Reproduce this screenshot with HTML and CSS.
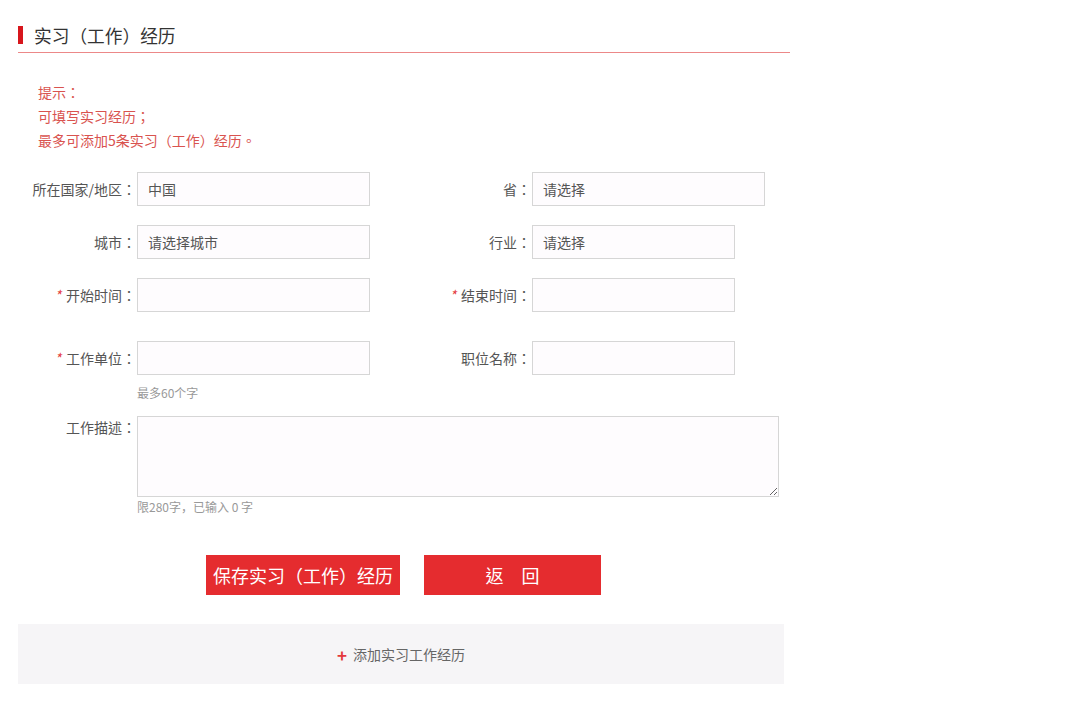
FILE: index.html
```html
<!DOCTYPE html>
<html lang="zh-CN">
<head>
    <meta charset="UTF-8">
    <title>实习（工作）经历</title>
    <link rel="stylesheet" href="styles.css">
</head>
<body>
    <div class="section">
        <h2 class="section-title"><span class="title-bar"></span>实习（工作）经历</h2>

        <div class="tips">
            <p>提示：</p>
            <p>可填写实习经历；</p>
            <p>最多可添加5条实习（工作）经历。</p>
        </div>

        <form class="exp-form">
            <div class="form-row">
                <div class="field">
                    <label class="field-label">所在国家/地区：</label>
                    <input type="text" class="text-input" value="中国">
                </div>
                <div class="field field-right">
                    <label class="field-label">省：</label>
                    <input type="text" class="text-input" value="请选择">
                </div>
            </div>

            <div class="form-row">
                <div class="field">
                    <label class="field-label">城市：</label>
                    <input type="text" class="text-input" value="请选择城市">
                </div>
                <div class="field field-right">
                    <label class="field-label">行业：</label>
                    <input type="text" class="text-input short" value="请选择">
                </div>
            </div>

            <div class="form-row row-gap">
                <div class="field">
                    <label class="field-label"><i class="req">*</i>开始时间：</label>
                    <input type="text" class="text-input">
                </div>
                <div class="field field-right">
                    <label class="field-label"><i class="req">*</i>结束时间：</label>
                    <input type="text" class="text-input short">
                </div>
            </div>

            <div class="form-row no-margin">
                <div class="field">
                    <label class="field-label"><i class="req">*</i>工作单位：</label>
                    <input type="text" class="text-input">
                </div>
                <div class="field field-right">
                    <label class="field-label">职位名称：</label>
                    <input type="text" class="text-input short">
                </div>
            </div>
            <p class="field-hint">最多60个字</p>

            <div class="form-row no-margin textarea-row">
                <div class="field field-top">
                    <label class="field-label">工作描述：</label>
                    <textarea class="text-area"></textarea>
                </div>
            </div>
            <p class="field-hint">限280字，已输入 0 字</p>

            <div class="btn-row">
                <button type="button" class="btn">保存实习（工作）经历</button>
                <button type="button" class="btn btn-back">返　回</button>
            </div>
        </form>

        <div class="add-bar">
            <span class="plus">+</span> 添加实习工作经历
        </div>
    </div>
</body>
</html>
```

FILE: styles.css
```css
* {
    margin: 0;
    padding: 0;
    box-sizing: border-box;
}

body {
    font-family: "Noto Sans CJK SC", "Microsoft YaHei", sans-serif;
    font-size: 14px;
    color: #555;
    background: #fff;
}

/* centred full-width punctuation, like YaHei */
.section-title,
.tips,
.field-label,
.btn {
    font-family: "Noto Sans CJK TC", "Noto Sans CJK SC", sans-serif;
    font-feature-settings: "locl" 0;
}

.section {
    width: 772px;
    margin-left: 18px;
}

.section-title {
    display: flex;
    align-items: center;
    font-size: 17.7px;
    font-weight: normal;
    color: #333;
    line-height: 28px;
    padding: 21px 0 3px;
    border-bottom: 1px solid #ec8888;
}

.title-bar {
    display: inline-block;
    width: 5px;
    height: 18px;
    background: #d7161c;
    margin-right: 11px;
}

.tips {
    padding: 27px 0 0 20px;
    color: #d9534f;
    line-height: 24px;
}

.exp-form {
    padding: 20px 0 0 12px;
}

.form-row {
    display: flex;
    margin-bottom: 19px;
}

.form-row.row-gap {
    margin-bottom: 29px;
}

.form-row.no-margin {
    margin-bottom: 0;
}

.field {
    display: flex;
    align-items: center;
}

.field-top {
    align-items: flex-start;
}

.field-right {
    margin-left: 55px;
}

.field-label {
    width: 107px;
    padding-right: 1px;
    text-align: right;
    color: #555;
    white-space: nowrap;
}

.field-top .field-label {
    padding-top: 1px;
}

.req {
    color: #e4393c;
    margin-right: 5px;
}

.text-input {
    width: 233px;
    height: 34px;
    border: 1px solid #d6d6d6;
    background: #fefcfe;
    padding: 0 10px;
    font-family: inherit;
    font-size: 14px;
    color: #555;
    outline: none;
}

.text-input.short {
    width: 203px;
}

.text-area {
    width: 642px;
    height: 81px;
    border: 1px solid #d6d6d6;
    background: #fefcfe;
    font-family: inherit;
    font-size: 14px;
    outline: none;
}

.field-hint {
    padding-left: 107px;
    font-size: 12px;
    color: #999;
    line-height: 18px;
    margin-top: 9px;
}

.textarea-row {
    margin-top: 14px;
}

.textarea-row + .field-hint {
    margin-top: 1px;
}

.btn-row {
    display: flex;
    gap: 24px;
    padding-left: 176px;
    margin-top: 39px;
}

.btn {
    width: 194px;
    height: 40px;
    border: none;
    background: #e52c2f;
    color: #fff;
    font-size: 18px;
    cursor: pointer;
}

.btn-back {
    width: 177px;
}

.add-bar {
    width: 766px;
    height: 60px;
    margin-top: 29px;
    background: #f6f5f7;
    display: flex;
    align-items: center;
    justify-content: center;
    color: #666;
    gap: 6px;
}

.plus {
    color: #e4393c;
    font-size: 17px;
    font-weight: bold;
}
```
